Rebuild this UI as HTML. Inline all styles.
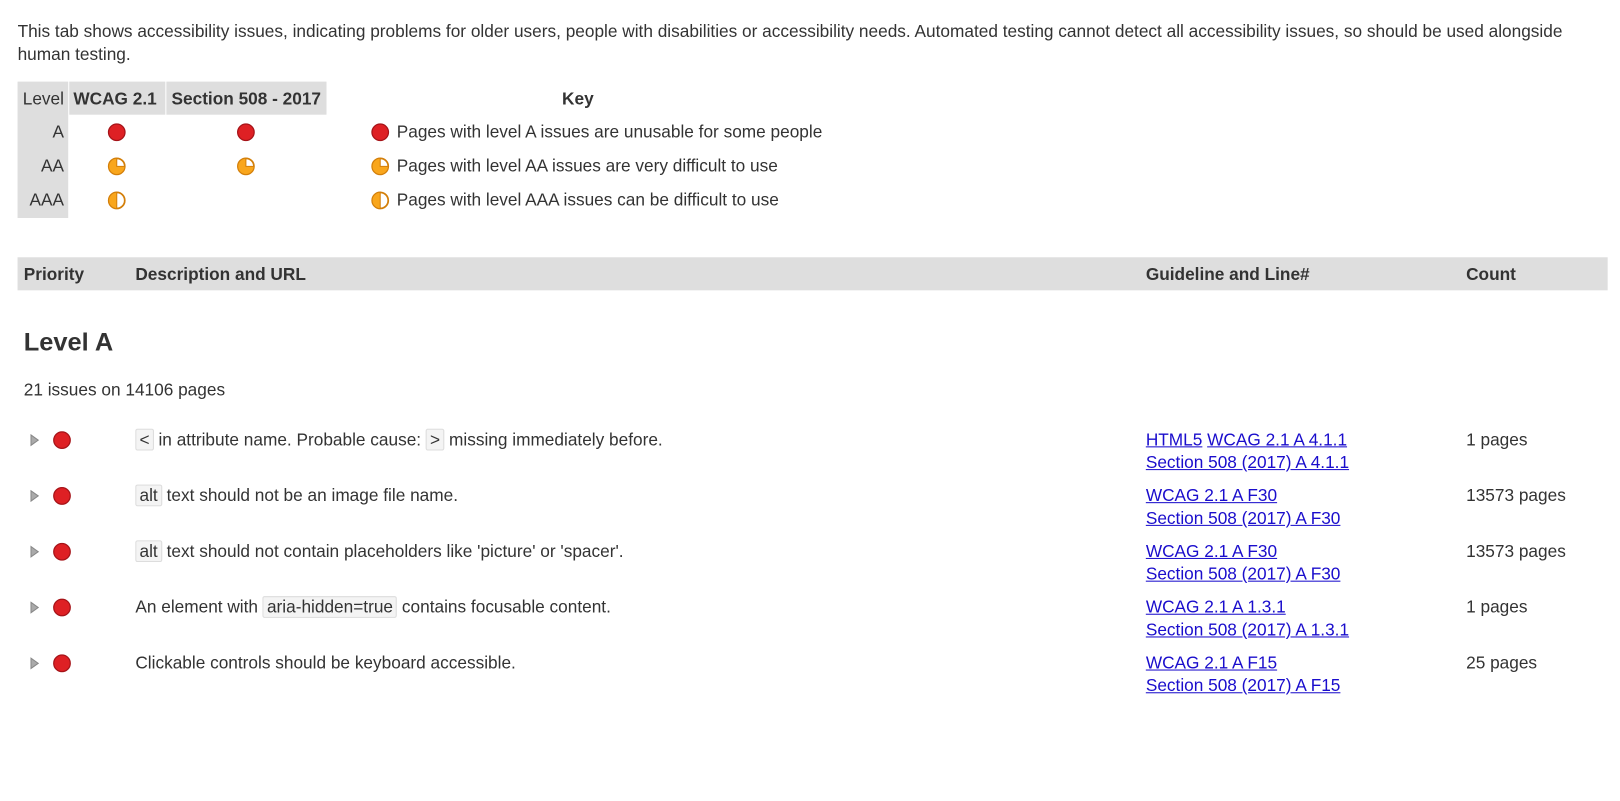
<!DOCTYPE html>
<html><head><meta charset="utf-8"><style>
html,body{margin:0;padding:0}
body{width:1620px;height:800px;background:#fff;overflow:hidden}
#w{position:absolute;left:0;top:0;width:1568px;height:775px;transform:scale(1.0332);transform-origin:0 0;font-family:"Liberation Sans",Arial,sans-serif;color:#333;font-size:16.7px;line-height:19px}
.a{position:absolute;white-space:nowrap}
a{color:#1a0dcc;text-decoration:underline}
.code{background:#f4f4f4;border:1px solid #ddd;border-radius:2px;padding:0 3px}
.gray{background:#dedede}
</style></head><body>
<svg width="0" height="0" style="position:absolute"><defs>
<g id="r"><circle cx="9" cy="9" r="8" fill="#de2024" stroke="#a51318" stroke-width="1.2"/></g>
<g id="aa"><circle cx="9" cy="9" r="8" fill="#f9a61c" stroke="#d37f0a" stroke-width="1.2"/><path d="M9 9V1.6A7.4 7.4 0 0 1 16.4 9Z" fill="#fff" stroke="#d37f0a" stroke-width="1"/></g>
<g id="aaa"><circle cx="9" cy="9" r="8" fill="#f9a61c" stroke="#d37f0a" stroke-width="1.2"/><path d="M9 1.6A7.4 7.4 0 0 1 9 16.4Z" fill="#fff" stroke="#d37f0a" stroke-width="1"/></g>
<g id="t"><path d="M1 1L8 6L1 11Z" fill="#aaa" stroke="#888" stroke-width="1"/></g>
</defs></svg>
<div id="w">
<div class="a" style="left:17px;top:20px;width:1540px;white-space:normal;line-height:22px">This tab shows accessibility issues, indicating problems for older users, people with disabilities or accessibility needs. Automated testing cannot detect all accessibility issues, so should be used alongside human testing.</div>

<div class="a gray" style="left:17px;top:79px;width:49px;height:132px"></div>
<div class="a gray" style="left:67px;top:79px;width:93px;height:32px"></div>
<div class="a gray" style="left:161px;top:79px;width:155px;height:32px"></div>
<div class="a" style="left:22px;top:86px">Level</div>
<div class="a" style="left:71px;top:86px;font-weight:bold">WCAG 2.1</div>
<div class="a" style="left:166px;top:86px;font-weight:bold">Section 508 - 2017</div>
<div class="a" style="left:544px;top:86px;font-weight:bold">Key</div>
<div class="a" style="left:17px;top:118px;width:45px;text-align:right">A</div>
<div class="a" style="left:17px;top:151px;width:45px;text-align:right">AA</div>
<div class="a" style="left:17px;top:184px;width:45px;text-align:right">AAA</div>
<svg class="a" style="left:104px;top:119px" width="18" height="18"><use href="#r"/></svg>
<svg class="a" style="left:229px;top:119px" width="18" height="18"><use href="#r"/></svg>
<svg class="a" style="left:359px;top:119px" width="18" height="18"><use href="#r"/></svg>
<svg class="a" style="left:104px;top:152px" width="18" height="18"><use href="#aa"/></svg>
<svg class="a" style="left:229px;top:152px" width="18" height="18"><use href="#aa"/></svg>
<svg class="a" style="left:359px;top:152px" width="18" height="18"><use href="#aa"/></svg>
<svg class="a" style="left:104px;top:185px" width="18" height="18"><use href="#aaa"/></svg>
<svg class="a" style="left:359px;top:185px" width="18" height="18"><use href="#aaa"/></svg>
<div class="a" style="left:384px;top:118px">Pages with level A issues are unusable for some people</div>
<div class="a" style="left:384px;top:151px">Pages with level AA issues are very difficult to use</div>
<div class="a" style="left:384px;top:184px">Pages with level AAA issues can be difficult to use</div>

<div class="a gray" style="left:17px;top:249px;width:1539px;height:32px"></div>
<div class="a" style="left:23px;top:256px;font-weight:bold">Priority</div>
<div class="a" style="left:131px;top:256px;font-weight:bold">Description and URL</div>
<div class="a" style="left:1109px;top:256px;font-weight:bold">Guideline and Line#</div>
<div class="a" style="left:1419px;top:256px;font-weight:bold">Count</div>

<div class="a" style="left:23px;top:318px;font-size:24.6px;line-height:28px;font-weight:bold">Level A</div>
<div class="a" style="left:23px;top:368px">21 issues on 14106 pages</div>

<svg class="a" style="left:29px;top:420px" width="10" height="13"><use href="#t"/></svg>
<svg class="a" style="left:51px;top:417px" width="18" height="18"><use href="#r"/></svg>
<div class="a" style="left:131px;top:416px"><span class="code">&lt;</span> in attribute name. Probable cause: <span class="code">&gt;</span> missing immediately before.</div>
<div class="a" style="left:1109px;top:415px;line-height:22px"><a>HTML5</a> <a>WCAG 2.1 A 4.1.1</a><br><a>Section 508 (2017) A 4.1.1</a></div>
<div class="a" style="left:1419px;top:416px">1 pages</div>

<svg class="a" style="left:29px;top:474px" width="10" height="13"><use href="#t"/></svg>
<svg class="a" style="left:51px;top:471px" width="18" height="18"><use href="#r"/></svg>
<div class="a" style="left:131px;top:470px"><span class="code">alt</span> text should not be an image file name.</div>
<div class="a" style="left:1109px;top:469px;line-height:22px"><a>WCAG 2.1 A F30</a><br><a>Section 508 (2017) A F30</a></div>
<div class="a" style="left:1419px;top:470px">13573 pages</div>

<svg class="a" style="left:29px;top:528px" width="10" height="13"><use href="#t"/></svg>
<svg class="a" style="left:51px;top:525px" width="18" height="18"><use href="#r"/></svg>
<div class="a" style="left:131px;top:524px"><span class="code">alt</span> text should not contain placeholders like 'picture' or 'spacer'.</div>
<div class="a" style="left:1109px;top:523px;line-height:22px"><a>WCAG 2.1 A F30</a><br><a>Section 508 (2017) A F30</a></div>
<div class="a" style="left:1419px;top:524px">13573 pages</div>

<svg class="a" style="left:29px;top:582px" width="10" height="13"><use href="#t"/></svg>
<svg class="a" style="left:51px;top:579px" width="18" height="18"><use href="#r"/></svg>
<div class="a" style="left:131px;top:578px">An element with <span class="code">aria-hidden=true</span> contains focusable content.</div>
<div class="a" style="left:1109px;top:577px;line-height:22px"><a>WCAG 2.1 A 1.3.1</a><br><a>Section 508 (2017) A 1.3.1</a></div>
<div class="a" style="left:1419px;top:578px">1 pages</div>

<svg class="a" style="left:29px;top:636px" width="10" height="13"><use href="#t"/></svg>
<svg class="a" style="left:51px;top:633px" width="18" height="18"><use href="#r"/></svg>
<div class="a" style="left:131px;top:632px">Clickable controls should be keyboard accessible.</div>
<div class="a" style="left:1109px;top:631px;line-height:22px"><a>WCAG 2.1 A F15</a><br><a>Section 508 (2017) A F15</a></div>
<div class="a" style="left:1419px;top:632px">25 pages</div>
</div>
</body></html>
